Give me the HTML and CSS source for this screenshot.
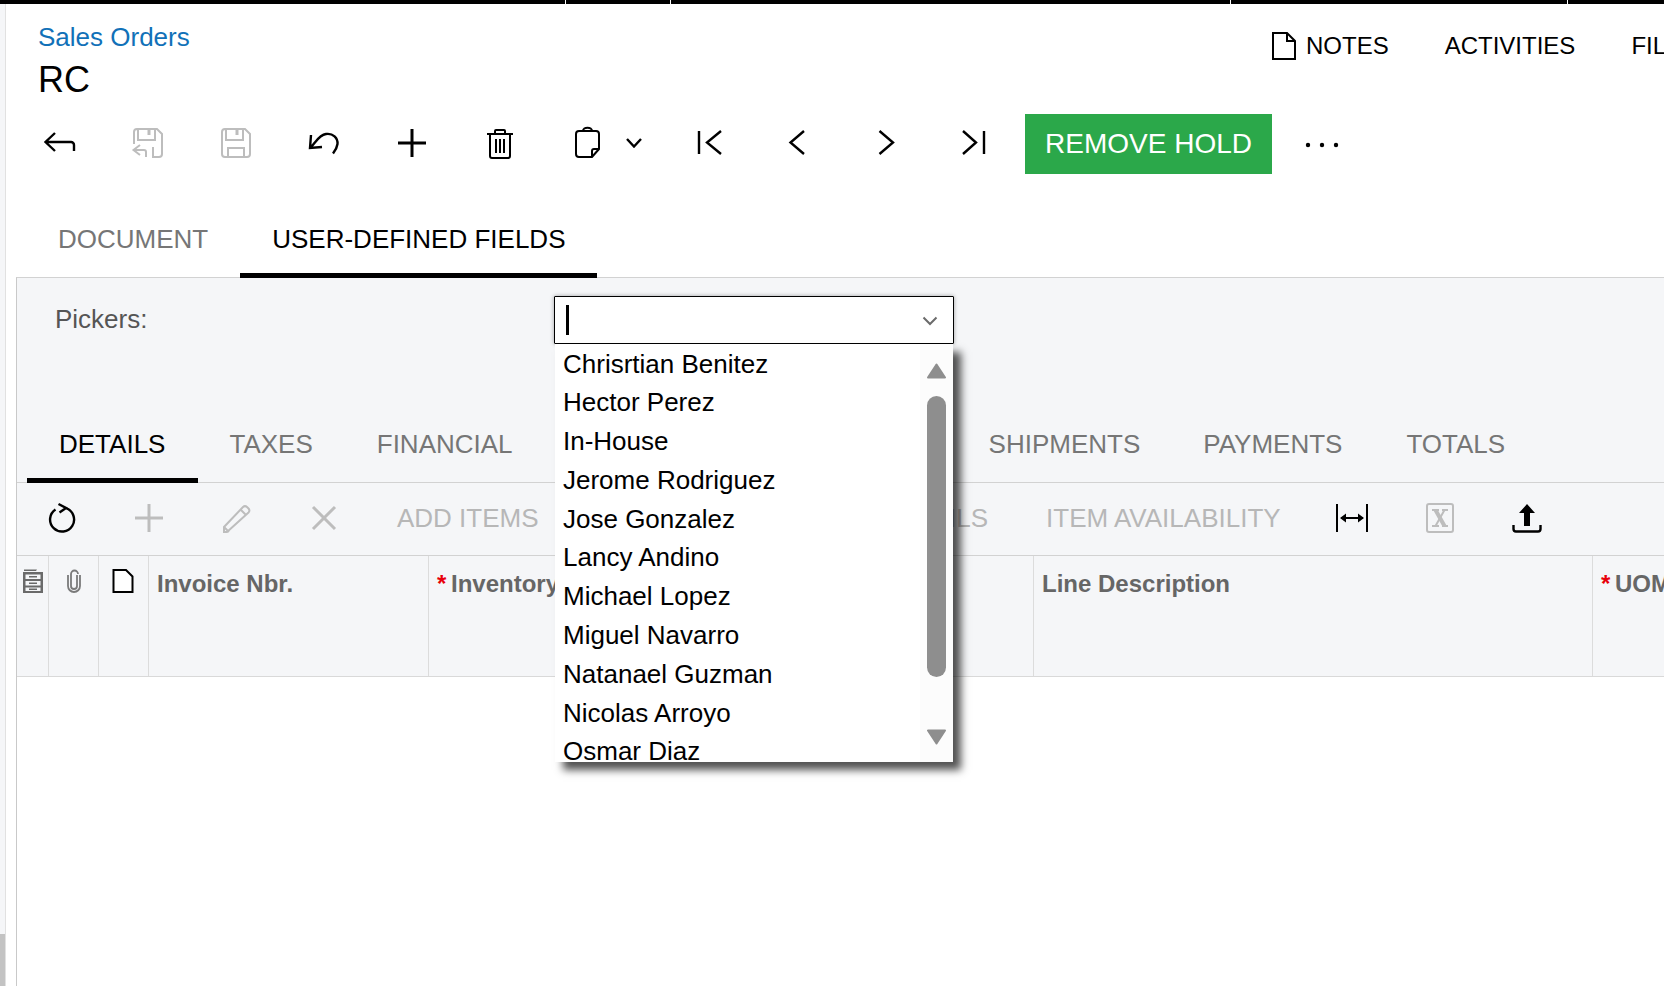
FILE: index.html
```html
<!DOCTYPE html>
<html lang="en">
<head>
<meta charset="utf-8">
<title>Sales Orders</title>
<link rel="stylesheet" href="styles.css">
</head>
<body>
<div class="topbar"><span class="seg s1"></span><span class="seg s2"></span><span class="seg s3"></span><span class="seg s4"></span><span class="seg s5"></span></div>
<div class="page">
  <div class="rail"><div class="rail-top"></div><div class="rail-bottom"></div></div>
  <main class="main">
    <header class="head">
      <div class="titles">
        <a class="crumb">Sales Orders</a>
        <h1 class="title">RC</h1>
      </div>
      <nav class="links">
        <span class="link link-notes"><svg class="doc" width="24" height="28" viewBox="0 0 24 28"><path d="M1 1H15L23 9V27H1ZM15 1V9H23" fill="none" stroke="#000" stroke-width="2"/></svg>NOTES</span>
        <span class="link">ACTIVITIES</span>
        <span class="link">FILES</span>
      </nav>
    </header>

    <div class="toolbar">
      <span class="slot"><svg class="ic" viewBox="0 0 32 32"><path d="M11 6L1.500 15L11 24M1.500 15H27a3 3 0 0 1 3 3V24" /></svg></span>
      <span class="slot"><svg class="ic off" viewBox="0 0 32 32"><path d="M21 20V30H27a3 3 0 0 0 3-3V7L25 2H5a3 3 0 0 0-3 3V17M6 2V13H23V2M8 18L1.500 23L8 28M1.500 23H12a2 2 0 0 1 2 2V30" /><path class="notch" d="M17 3V8" /></svg></span>
      <span class="slot"><svg class="ic off" viewBox="0 0 32 32"><path d="M5 2H25L30 7V27a3 3 0 0 1-3 3H5a3 3 0 0 1-3-3V5a3 3 0 0 1 3-3ZM6 2V13H23V2M8 30V21H24V30" /><path class="notch" d="M17 3V8" /></svg></span>
      <span class="slot"><svg class="ic" viewBox="0 0 32 32"><path d="M3 8L2 21L14 20M2.500 20.500C8 15 11 8 18 7C25 6 30 11 29.500 17C29 21 27 24 25 26.500" /></svg></span>
      <span class="slot"><svg class="ic bold" viewBox="0 0 32 32"><path d="M16 2V30M2 16H30" /></svg></span>
      <span class="slot"><svg class="ic thin" viewBox="0 0 32 32"><path d="M3 7H29M11 7V4a1 1 0 0 1 1-1H20a1 1 0 0 1 1 1V7M6 7V29a2 2 0 0 0 2 2H24a2 2 0 0 0 2-2V7M12 12V26M16 12V26M20 12V26" /></svg></span>
      <span class="split">
        <svg class="ic thin" viewBox="0 0 32 32"><path d="M7 4H24a3 3 0 0 1 3 3V22L20 30H7a3 3 0 0 1-3-3V7a3 3 0 0 1 3-3ZM27 22H22a2 2 0 0 0-2 2V30M11 4a4 3 0 0 1 9 0" /></svg>
        <svg class="chev" width="16" height="10" viewBox="0 0 16 10"><path d="M1 1L8 8.500L15 1" /></svg>
      </span>
      <span class="slot"><svg class="ic" viewBox="0 0 32 32"><path d="M5 4V27M27 4L13 15.500L27 27" /></svg></span>
      <span class="slot"><svg class="ic" viewBox="0 0 32 32"><path d="M22 4L8.500 15.500L22 27" /></svg></span>
      <span class="slot"><svg class="ic" viewBox="0 0 32 32"><path d="M9.500 4L23 15.500L9.500 27" /></svg></span>
      <span class="slot"><svg class="ic" viewBox="0 0 32 32"><path d="M5 4L18 15.500L5 27M26 4V27" /></svg></span>
      <button class="primary">REMOVE HOLD</button>
      <span class="slot"><svg class="dots" width="36" height="8" viewBox="0 0 36 8"><circle cx="4" cy="4" r="2.200"/><circle cx="18" cy="4" r="2.200"/><circle cx="32" cy="4" r="2.200"/></svg></span>
    </div>

    <div class="tabs">
      <span class="tab">DOCUMENT</span>
      <span class="tab active">USER-DEFINED FIELDS</span>
    </div>

    <section class="panel">
      <div class="form">
        <label class="field-label">Pickers:</label>
        <div class="combo">
          <span class="caret"></span>
          <svg class="combo-chev" width="16" height="10" viewBox="0 0 16 10"><path d="M1.500 1.500L8 8L14.500 1.500" /></svg>
          <div class="dropdown">
            <ul class="options">
              <li>Chrisrtian Benitez</li>
              <li>Hector Perez</li>
              <li>In-House</li>
              <li>Jerome Rodriguez</li>
              <li>Jose Gonzalez</li>
              <li>Lancy Andino</li>
              <li>Michael Lopez</li>
              <li>Miguel Navarro</li>
              <li>Natanael Guzman</li>
              <li>Nicolas Arroyo</li>
              <li>Osmar Diaz</li>
            </ul>
            <div class="scroll">
              <svg class="arrow" width="19" height="16" viewBox="0 0 19 16"><path d="M9.500 1.500L18 14.500H1Z" /></svg>
              <div class="thumb"></div>
              <svg class="arrow" width="19" height="16" viewBox="0 0 19 16"><path d="M1 1.500H18L9.500 14.500Z" /></svg>
            </div>
          </div>
        </div>
      </div>

      <div class="subtabs">
        <span class="subtab subtab-first active">DETAILS</span>
        <span class="subtab">TAXES</span>
        <span class="subtab">FINANCIAL</span>
        <span class="subtab subtab-after-menu">SHIPMENTS</span>
        <span class="subtab">PAYMENTS</span>
        <span class="subtab">TOTALS</span>
      </div>

      <div class="gridbar">
        <span class="gslot"><svg class="ic" viewBox="0 0 32 32"><path d="M9.500 7.500A12 12 0 1 0 20 6.200M12.500 2L20 6L13.500 10.500" /></svg></span>
        <span class="gslot"><svg class="ic off wide" viewBox="0 0 32 32"><path d="M16 2V30M2 16H30" /></svg></span>
        <span class="gslot"><svg class="ic off" viewBox="0 0 32 32"><path d="M6 30H3V25L22 5a3 3 0 0 1 4 0l1.500 1.500a3 3 0 0 1 0 4ZM3 25L8 30M20 8L25 13" /></svg></span>
        <span class="gslot"><svg class="ic off wide" viewBox="0 0 32 32"><path d="M5 5L27 27M27 5L5 27" /></svg></span>
        <span class="gbtn">ADD ITEMS</span>
        <span class="gbtn gbtn-far">LINE DETAILS</span>
        <span class="gbtn">ITEM AVAILABILITY</span>
        <span class="gslot gslot-fit"><svg class="ic thin" viewBox="0 0 32 32"><path d="M1 2V30M31 2V30M5 16H27" /><path class="solid" d="M4 16L10 11.500V20.500ZM28 16L22 11.500V20.500Z" /></svg></span>
        <span class="gslot"><svg class="ic off" viewBox="0 0 32 32"><rect x="3" y="2" width="26" height="28" rx="2"/><path class="x-thick" d="M11.500 8L20.500 24" /><path d="M20.500 8L11.500 24M8 8H15M18 8H24M8 24H15M18 24H24" /></svg></span>
        <span class="gslot"><svg class="ic" viewBox="0 0 32 32"><path class="solid" d="M16 2L24 11H19V24H13V11H8Z" /><path d="M2.500 23V27a2.500 2.500 0 0 0 2.500 2.500H27a2.500 2.500 0 0 0 2.500-2.500V23" /></svg></span>
      </div>

      <div class="gridhead">
        <div class="cell cell-icon"><svg width="20" height="24" viewBox="0 0 20 24"><path class="cab" d="M1 2H13L14 0.500H1ZM0 3H20V24H0ZM2.500 5.500V10H17.500V5.500ZM2.500 12V16.500H17.500V12ZM2.500 18.500V22H17.500V18.500ZM6 7H14V8.500H6ZM6 13.500H14V15H6ZM6 19.500H14V21H6Z" fill-rule="evenodd"/></svg></div>
        <div class="cell cell-icon"><svg class="clip" width="18" height="24" viewBox="0 0 18 24"><path d="M12 6V17a3 3 0 0 1-6 0V5a3.500 3.500 0 0 1 7 0" /><path d="M3 6V17a6 6 0 0 0 12 0V6" /></svg></div>
        <div class="cell cell-icon cell-doc"><svg class="docsm" width="22" height="24" viewBox="0 0 22 24"><path d="M1.500 1H14L20.500 7.500V23H1.500Z" /></svg></div>
        <div class="cell">Invoice Nbr.</div>
        <div class="cell req"><span class="star">*</span>Inventory ID</div>
        <div class="cell">Line Description</div>
        <div class="cell req"><span class="star">*</span>UOM</div>
      </div>
    </section>
  </main>
</div>
</body>
</html>
```

FILE: styles.css
```css
* { box-sizing: border-box; }
html, body { margin: 0; padding: 0; height: 986px; overflow: hidden; background: #fff; }
body { font-family: "Liberation Sans", Arial, sans-serif; color: #000; }

.topbar { display: flex; gap: 1px; height: 4px; background: #fff; }
.seg { background: #000; height: 4px; display: block; }
.s1 { width: 565px; }
.s2 { width: 104px; }
.s3 { width: 559px; }
.s4 { width: 336px; }
.s5 { flex: 1; }

.page { display: flex; height: 982px; }
.rail { flex: 0 0 6px; display: flex; flex-direction: column; border-right: 1px solid #e1e1e1; }
.rail-top { flex: 1; background: #f5f6f8; }
.rail-bottom { height: 52px; background: #c3c3c3; }
.main { flex: 1; min-width: 0; overflow: hidden; }

.head { display: flex; align-items: flex-start; padding-top: 18px; }
.titles { flex: 0 0 1266px; padding-left: 32px; }
.crumb { display: block; font-size: 26px; line-height: 30px; color: #1171b8; }
.title { margin: 8px 0 0; font-size: 36px; line-height: 40px; font-weight: 400; }
.links { display: flex; flex-shrink: 0; gap: 56px; font-size: 24px; line-height: 28px; margin-top: 10px; white-space: nowrap; }
.link { display: flex; align-items: center; }
.doc { margin-right: 10px; }

.toolbar { display: flex; align-items: flex-start; margin-top: 14px; padding-left: 10px; }
.slot { flex: 0 0 88px; height: 58px; display: flex; align-items: center; justify-content: center; }
.ic { width: 32px; height: 32px; fill: none; stroke: #000; stroke-width: 2.4; overflow: visible; }
.ic.bold { stroke-width: 3; }
.ic.thin { stroke-width: 2; }
.ic.off { stroke: #bdbdbd; stroke-width: 2; }
.ic.off.wide { stroke-width: 3; }
.ic .solid { fill: #000; stroke: none; }
.ic .notch { stroke-width: 3; }
.ic .x-thick { stroke-width: 4; }
.split { flex: 0 0 122px; height: 58px; display: flex; align-items: center; padding-left: 28px; }
.chev { margin-left: 22px; fill: none; stroke: #000; stroke-width: 2.4; }
.primary { flex: 0 0 247px; height: 60px; margin: 0 6px 0 7px; padding: 0; border: 0; background: #2ba84a; color: #fff; font: 400 28px/60px "Liberation Sans", Arial, sans-serif; }
.dots { fill: #000; margin-top: 4px; }

.tabs { display: flex; height: 74px; margin-top: 30px; padding-left: 20px; position: relative; z-index: 1; }
.tab { padding: 1px 32px 0; font-size: 26px; line-height: 69px; color: #767676; border-bottom: 5px solid transparent; }
.tab.active { color: #000; border-bottom-color: #000; }

.panel { margin: -1px 0 0 10px; height: 709px; border-left: 1px solid #c9c9c9; border-top: 1px solid #d2d2d2; background: #fff; }
.form { display: flex; height: 130px; padding: 18px 0 0 38px; background: #f5f6f8; }
.field-label { flex: 0 0 499px; font-size: 26px; line-height: 46px; color: #555; }
.combo { position: relative; width: 400px; height: 48px; background: #fff; border: 1px solid #000; border-radius: 1px; box-shadow: 0 0 4px rgba(0,0,0,.35); z-index: 5; display: flex; align-items: center; justify-content: space-between; padding: 0 15px 0 11px; }
.caret { width: 3px; height: 30px; background: #000; }
.combo-chev { fill: none; stroke: #6b6b6b; stroke-width: 2; margin-top: 2px; }
.dropdown { position: absolute; top: 47px; left: 0; width: 398px; height: 418px; display: flex; background: #fff; box-shadow: 8px 8px 8px rgba(0,0,0,.68); overflow: hidden; }
.options { flex: 1; margin: 0; padding: 0.500px 0 0 8px; list-style: none; font-size: 26px; line-height: 38.800px; color: #000; white-space: nowrap; overflow: hidden; }
.scroll { flex: 0 0 33px; display: flex; flex-direction: column; align-items: flex-start; padding: 19px 0 0 7px; background: #fcfcfc; }
.arrow { fill: #8e8e8e; stroke: #8e8e8e; stroke-width: 2; stroke-linejoin: round; }
.thumb { width: 19px; height: 281px; margin: 17px 0 52px; border-radius: 10px; background: #8e8e8e; }

.subtabs { display: flex; height: 75px; padding-left: 10px; background: #f5f6f8; border-bottom: 1px solid #d2d2d2; white-space: nowrap; }
.subtab { padding: 0 32px; height: 75px; font-size: 26px; line-height: 72px; color: #767676; border-bottom: 5px solid transparent; flex-shrink: 0; }
.subtab-first { padding: 0 33px 0 32px; margin-right: -1px; }
.subtab-after-menu { margin-left: 412px; padding-right: 31px; }
.subtab.active { color: #000; border-bottom-color: #000; }

.gridbar { display: flex; align-items: center; height: 72px; padding: 0 0 2px 1px; background: #f5f6f8; white-space: nowrap; }
.gslot { flex: 0 0 87.500px; display: flex; justify-content: center; }
.gslot-fit { margin-left: -1px; }
.gbtn { padding: 0 29px; font-size: 26px; line-height: 30px; color: #b7b7b7; flex-shrink: 0; }
.gbtn-far { margin-left: 220px; }

.gridhead { display: grid; grid-template-columns: 32px 50px 50px 280px 605px 559px 1fr; height: 122px; background: #f5f6f8; border-top: 1px solid #d2d2d2; border-bottom: 1px solid #d9d9d9; }
.cell { padding: 14px 8px 0; border-right: 1px solid #dcdcdc; font-size: 24px; line-height: 28px; font-weight: 700; color: #666; white-space: nowrap; overflow: hidden; }
.cell:last-child { border-right: 0; }
.cell-icon { display: flex; justify-content: center; align-items: flex-start; padding: 13px 0 0; }
.cell-doc { padding-right: 2px; }
.req { padding-left: 8px; }
.star { display: inline-block; width: 14px; color: #e8000b; }
.cab { fill: #6a6a6a; }
.clip { fill: none; stroke: #7a7a7a; stroke-width: 1.800; }
.docsm { fill: #fff; stroke: #000; stroke-width: 2; }
```
